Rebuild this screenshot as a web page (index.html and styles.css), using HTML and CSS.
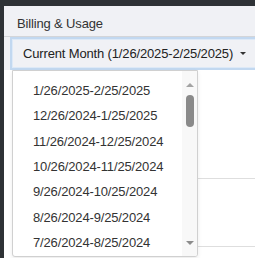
FILE: index.html
```html
<!DOCTYPE html>
<html lang="en">
<head>
  <meta charset="UTF-8">
  <meta name="viewport" content="width=device-width, initial-scale=1">
  <title>Billing &amp; Usage</title>
  <link rel="stylesheet" href="styles.css">
</head>
<body>
  <div class="topbar"></div>
  <div class="shell">
    <aside class="rail"></aside>
    <main class="page">
      <header class="page-head">Billing &amp; Usage</header>

      <div class="toolbar">
        <div class="period">
          <button class="period-btn">Current Month (1/26/2025-2/25/2025)<span class="caret"></span></button>

          <div class="period-menu">
            <ul class="period-list">
              <li>1/26/2025-2/25/2025</li>
              <li>12/26/2024-1/25/2025</li>
              <li>11/26/2024-12/25/2024</li>
              <li>10/26/2024-11/25/2024</li>
              <li>9/26/2024-10/25/2024</li>
              <li>8/26/2024-9/25/2024</li>
              <li>7/26/2024-8/25/2024</li>
            </ul>
            <div class="scrollbar">
              <span class="arrow up"></span>
              <span class="thumb"></span>
              <span class="arrow down"></span>
            </div>
          </div>
        </div>
      </div>

      <section class="usage">
        <div class="usage-row first"></div>
        <div class="usage-row second"></div>
      </section>
    </main>
  </div>
</body>
</html>
```

FILE: styles.css
```css
html, body {
  margin: 0;
  height: 100%;
  overflow: hidden;
}
body {
  font-family: "Liberation Sans", Arial, sans-serif;
  font-size: 13px;
  letter-spacing: -0.15px;
  color: #333;
  background: #fff;
}
.topbar {
  height: 6px;
  background: #2e3236;
}
.shell {
  display: flex;
  height: calc(100% - 6px);
}
.rail {
  width: 4px;
  flex: none;
  background: #2e3236;
}
.page {
  flex: 1;
  min-width: 0;
}
.page-head {
  height: 25px;
  padding: 5px 0 0 13px;
  line-height: 25px;
  background: #f0f1f5;
  border-bottom: 1px solid #d3d5d9;
  color: #333;
}
.toolbar {
  padding-left: 6px;
  background: #f0f1f5;
}
.period {
  position: relative;
  display: inline-block;
}
.period-btn {
  display: flex;
  align-items: center;
  height: 33px;
  padding: 0 16px 0 11px;
  font: inherit;
  letter-spacing: inherit;
  color: #222;
  white-space: nowrap;
  background: #f0f1f5;
  border: 2px solid #c2d8f0;
  box-shadow: inset 0 0 0 1px #dde9f7;
}
.caret {
  margin-left: 7px;
  border-left: 3px solid transparent;
  border-right: 3px solid transparent;
  border-top: 3px solid #333;
}
.period-menu {
  position: absolute;
  top: 100%;
  left: 2px;
  z-index: 5;
  display: flex;
  width: 184px;
  height: 185px;
  background: #fff;
  border: 1px solid #d0d0d0;
  border-radius: 0 0 3px 3px;
  box-shadow: 0 2px 4px rgba(0,0,0,0.08);
  overflow: hidden;
}
.period-list {
  flex: 1;
  margin: 0;
  padding: 7px 0 0;
  list-style: none;
  overflow: hidden;
}
.period-list li {
  padding: 0 20px;
  line-height: 25.33px;
  white-space: nowrap;
  color: #333;
}
.scrollbar {
  width: 15px;
  flex: none;
  display: flex;
  flex-direction: column;
  align-items: center;
  background: #f8f8f8;
}
.arrow {
  border-left: 4px solid transparent;
  border-right: 4px solid transparent;
}
.arrow.up {
  margin-top: 12px;
  border-bottom: 4px solid #a3a3a3;
}
.arrow.down {
  margin-top: auto;
  margin-bottom: 11px;
  border-top: 4px solid #8c8c8c;
}
.thumb {
  width: 8px;
  height: 32px;
  margin-top: 8px;
  border-radius: 4px;
  background: #8a8a8a;
}
.usage {
  margin-left: 8px;
}
.usage-row {
  border-bottom: 1px solid #dedede;
}
.usage-row.first {
  height: 108px;
}
.usage-row.second {
  height: 67px;
}
```
